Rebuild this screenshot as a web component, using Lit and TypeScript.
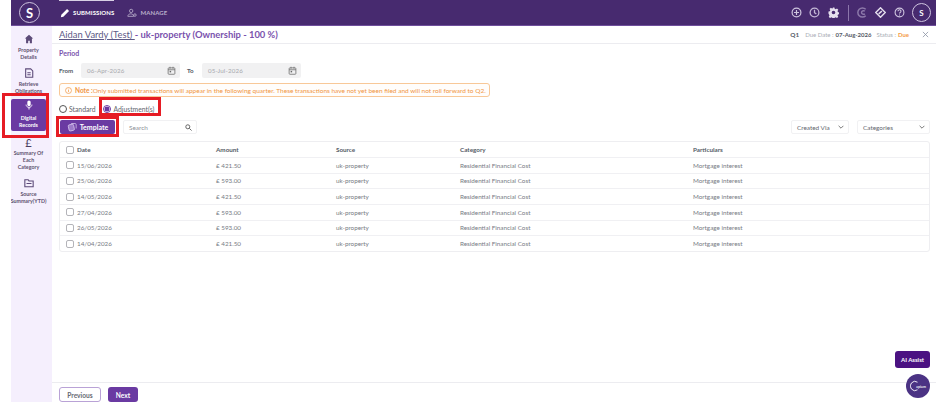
import { LitElement, css, html, svg } from "lit";
import { customElement } from "lit/decorators.js";

const rows = [
  ["15/06/2026", "£ 421.50"],
  ["25/06/2026", "£ 593.00"],
  ["14/05/2026", "£ 421.50"],
  ["27/04/2026", "£ 593.00"],
  ["26/05/2026", "£ 593.00"],
  ["14/04/2026", "£ 421.50"],
];

const calendar = html`<svg class="cal" viewBox="0 0 12 12" fill="none" stroke="#666" stroke-width="1">
  <rect x="1.5" y="2.5" width="9" height="8.5" rx="1"></rect>
  <path d="M1.5 5h9M4 1v2.500M8 1v2.500"></path>
  <rect x="3.5" y="6.5" width="2" height="2" fill="#666" stroke="none"></rect>
</svg>`;

const chevron = html`<svg class="chev" viewBox="0 0 10 6" fill="none" stroke="#555" stroke-width="1.3"><path d="M1 1l4 4 4-4"></path></svg>`;

const navIcons = {
  home: svg`<path d="M6 1L1 5.500h1.500V11h2.500V8h2v3h2.500V5.500H11z" fill="#5c4a78"></path>`,
  doc: svg`<path d="M2 1h6l2.500 2.500V11H2z" fill="none" stroke="#5c4a78" stroke-width="1.300"></path><path d="M4 5h4v1.200H4zM4 7.500h4v1.200H4z" fill="#5c4a78"></path>`,
  mic: svg`<rect x="4" y="0.500" width="4" height="7" rx="2" fill="#fff"></rect><path d="M2.500 5.500c0 4.500 7 4.500 7 0" fill="none" stroke="#fff"></path><path d="M5.400 9h1.200v2.500H5.400z" fill="#fff"></path>`,
  folder: svg`<path d="M1 2h4l1 1.500h5V10.500H1z" fill="none" stroke="#5c4a78" stroke-width="1.300"></path><path d="M3 6h6v1.200H3z" fill="#5c4a78"></path>`,
};

@customElement("app-root")
export class AppRoot extends LitElement {
  static styles = css`
    :host {
      display: block;
      position: relative;
      width: 936px;
      height: 402px;
      overflow: hidden;
      background: #fff;
      font-family: "Lato", "Noto Sans", sans-serif;
      color: #555b66;
    }
    .shell {
      margin-left: 11px;
      height: 100%;
      display: flex;
      flex-direction: column;
    }
    header {
      height: 26px;
      box-sizing: border-box;
      flex: none;
      background: #472a6f;
      border-bottom: 1px solid #6f4e9c;
      display: flex;
      align-items: center;
      color: #fff;
      padding-right: 5px;
      position: relative;
    }
    .logo {
      width: 21px;
      height: 21px;
      box-sizing: border-box;
      border: 1px solid #cfc4df;
      border-radius: 50%;
      display: flex;
      align-items: center;
      justify-content: center;
      font-size: 13px;
      font-weight: 700;
      color: #fff;
      flex: none;
    }
    .logo.main {
      margin-left: 8px;
    }
    .tab {
      display: flex;
      align-items: center;
      gap: 3px;
      font-size: 6px;
      font-weight: 700;
      letter-spacing: 0.1px;
    }
    .tab svg {
      width: 10px;
      height: 10px;
    }
    .tab.first {
      margin-left: 20px;
    }
    .tab.second {
      margin-left: 13px;
      color: #b9aecb;
    }
    .strip {
      position: absolute;
      left: 48px;
      top: 0;
      width: 55px;
      height: 1px;
      background: #d8d0e4;
    }
    .tools {
      margin-left: auto;
      display: flex;
      align-items: center;
      gap: 7.5px;
    }
    .tools svg {
      width: 11px;
      height: 11px;
      display: block;
    }
    .tools .sep {
      width: 1px;
      height: 16px;
      background: #8c76ab;
      margin-left: 2px;
    }
    .tools .logo {
      width: 19px;
      height: 19px;
      font-size: 8px;
    }
    .body {
      flex: 1;
      display: flex;
      min-height: 0;
    }
    nav {
      width: 41px;
      flex: none;
      box-sizing: border-box;
      overflow: hidden;
      background: #f5effd;
      display: flex;
      flex-direction: column;
      align-items: center;
      padding: 8px 6px 0 0;
      font-size: 5.3px;
      font-weight: 700;
      line-height: 7px;
      text-align: center;
      color: #5d5270;
    }
    .item {
      width: 35px;
      display: flex;
      flex-direction: column;
      align-items: center;
      margin-bottom: 7px;
      white-space: nowrap;
    }
    .item svg {
      width: 10px;
      height: 10px;
      margin-bottom: 3px;
    }
    .item.active {
      background: #6a3aa2;
      border-radius: 2px;
      color: #fff;
      padding-top: 1px;
      margin: -3px 0 0;
      height: 32px;
      box-sizing: border-box;
      flex: none;
    }
    .item.active svg {
      margin-bottom: 5px;
    }
    .item.pound {
      margin-top: 7px;
    }
    .pound b {
      font-size: 11px;
      line-height: 10px;
      margin-bottom: 2px;
      font-weight: 400;
      color: #4a3d60;
    }
    main {
      flex: 1;
      min-width: 0;
      display: flex;
      flex-direction: column;
    }
    .title {
      height: 18px;
      box-sizing: border-box;
      flex: none;
      padding: 0 7px;
      border-bottom: 1px solid #ececf0;
      display: flex;
      align-items: center;
      font-size: 9.4px;
      font-weight: 700;
      color: #7a52ad;
    }
    .title u {
      color: #5d5a86;
      font-weight: 400;
    }
    .meta {
      margin-left: auto;
      display: flex;
      align-items: center;
      font-size: 6px;
      font-weight: 400;
      color: #a9adb5;
      gap: 5px;
    }
    .meta b {
      color: #555b66;
      font-weight: 700;
    }
    .meta .q {
      font-size: 6.4px;
      margin-right: 1px;
    }
    .meta .due {
      color: #f49b45;
      font-weight: 700;
    }
    .meta span.pair {
      display: inline-flex;
      gap: 2px;
    }
    .meta svg {
      width: 7px;
      height: 7px;
      margin-left: 8px;
    }
    .content {
      flex: 1;
      padding: 0 6px 0 7px;
      min-height: 0;
    }
    .period {
      font-size: 7px;
      font-weight: 700;
      color: #7a52ad;
      margin-top: 5px;
      line-height: 9px;
    }
    .dates {
      display: flex;
      align-items: center;
      margin-top: 5px;
      font-size: 6.2px;
      font-weight: 700;
    }
    .dates .from {
      width: 22px;
    }
    .dates .to {
      width: 15px;
      margin-left: 7px;
    }
    .date {
      width: 99px;
      height: 15px;
      box-sizing: border-box;
      background: #f1f1f2;
      border-radius: 2px;
      padding: 0 4px 0 6px;
      display: flex;
      align-items: center;
      justify-content: space-between;
      font-weight: 400;
      color: #a6a8ad;
      letter-spacing: 0.15px;
    }
    .cal {
      width: 9px;
      height: 9px;
    }
    .note {
      width: 431px;
      height: 14px;
      box-sizing: border-box;
      margin-top: 5px;
      border: 1px solid #f8c898;
      border-radius: 3px;
      background: #fffdfb;
      color: #f0953f;
      font-size: 6.5px;
      display: flex;
      align-items: center;
      padding-left: 5px;
      gap: 3px;
      white-space: nowrap;
    }
    .note svg {
      width: 7px;
      height: 7px;
      flex: none;
    }
    .note b {
      font-weight: 700;
    }
    .radios {
      display: flex;
      align-items: center;
      font-size: 6.8px;
      margin-top: 6px;
      height: 12px;
      color: #63666e;
    }
    .radio {
      width: 8px;
      height: 8px;
      box-sizing: border-box;
      border: 1px solid #555;
      border-radius: 50%;
      background: #fff;
      margin-right: 2px;
      flex: none;
    }
    .radio.on {
      border-color: #6a3aa2;
      background: radial-gradient(circle, #6a3aa2 0 2.200px, #fff 2.700px);
    }
    .radios span + .radio {
      margin-left: 8px;
    }
    .tools-row {
      display: flex;
      align-items: center;
      margin-top: 5px;
      height: 14px;
    }
    .template {
      margin-left: 1px;
      width: 55px;
      height: 14px;
      border-radius: 2px;
      background: #6a3aa2;
      color: #fff;
      font-size: 7px;
      font-weight: 700;
      display: flex;
      align-items: center;
      justify-content: center;
      gap: 3px;
    }
    .template svg {
      width: 10px;
      height: 10px;
    }
    .search {
      width: 74px;
      height: 14px;
      box-sizing: border-box;
      margin-left: 8px;
      border: 1px solid #f1f1f3;
      border-radius: 2px;
      display: flex;
      align-items: center;
      justify-content: space-between;
      padding: 0 4px 0 5px;
      font-size: 6.4px;
      color: #8d9097;
    }
    .search svg {
      width: 7px;
      height: 7px;
    }
    .select {
      height: 14px;
      box-sizing: border-box;
      border: 1px solid #f1f1f3;
      border-radius: 2px;
      display: flex;
      align-items: center;
      justify-content: space-between;
      padding: 0 4px 0 5px;
      font-size: 6.4px;
      color: #63666e;
    }
    .select.via {
      width: 58px;
      margin-left: auto;
    }
    .select.cats {
      width: 73px;
      margin-left: 8px;
    }
    .chev {
      width: 6px;
      height: 4px;
    }
    .table {
      margin-top: 7px;
      border: 1px solid #eeeef1;
      border-radius: 3px;
      font-size: 6.3px;
    }
    .row {
      display: grid;
      grid-template-columns: 150px 120px 124px 233px 1fr;
      height: 15.67px;
      align-items: center;
      border-top: 1px solid #f0f0f3;
      box-sizing: border-box;
      padding-left: 6px;
      color: #777b84;
    }
    .row.head {
      border-top: 0;
      color: #555b66;
      font-weight: 700;
      height: 15px;
    }
    .first {
      display: flex;
      align-items: center;
      gap: 3px;
    }
    .check {
      width: 8px;
      height: 8px;
      box-sizing: border-box;
      border: 1px solid #b4b4b9;
      border-radius: 2px;
      background: #fff;
    }
    footer {
      height: 20px;
      flex: none;
      border-top: 1px solid #ececf0;
      box-sizing: border-box;
      padding: 4px 0 0 7px;
      display: flex;
      gap: 7px;
    }
    .btn {
      height: 15px;
      box-sizing: border-box;
      border-radius: 3px;
      display: flex;
      align-items: center;
      justify-content: center;
      font-size: 6.6px;
      font-weight: 700;
    }
    .btn.prev {
      width: 42px;
      border: 1px solid #b9a2d6;
      color: #666a73;
    }
    .btn.next {
      width: 30px;
      background: #6a3aa2;
      color: #fff;
    }
    .ai {
      position: absolute;
      left: 895px;
      top: 351px;
      width: 35px;
      height: 17px;
      border-radius: 3px;
      background: #4b1282;
      color: #fff;
      font-size: 6px;
      font-weight: 700;
      display: flex;
      align-items: center;
      justify-content: center;
    }
    .bot {
      position: absolute;
      left: 906px;
      top: 374px;
      width: 24px;
      height: 24px;
      border-radius: 50%;
      background: #4b3384;
      display: flex;
      align-items: center;
      justify-content: center;
      color: #eee9f5;
      font-size: 3.6px;
      font-weight: 700;
      gap: 0;
    }
    .bot svg {
      width: 9px;
      height: 12px;
      margin-right: -3px;
    }
    .mark {
      position: absolute;
      box-sizing: border-box;
      border: 3px solid #e61c24;
    }
    .mark.a {
      left: 2px;
      top: 93px;
      width: 47px;
      height: 45px;
    }
    .mark.b {
      left: 99px;
      top: 97px;
      width: 62px;
      height: 19px;
    }
    .mark.c {
      left: 56px;
      top: 116px;
      width: 63px;
      height: 21px;
    }
  `;

  private navIcon(name: keyof typeof navIcons) {
    return html`<svg viewBox="0 0 12 12">${navIcons[name]}</svg>`;
  }

  render() {
    return html`
      <div class="shell">
        <header>
          <div class="logo main">S</div>
          <div class="strip"></div>
          <div class="tab first">
            <svg viewBox="0 0 12 12"><path d="M1 11l.6-3L8.500 1.100l2.400 2.400L4 10.400z" fill="#fff"></path></svg>
            SUBMISSIONS
          </div>
          <div class="tab second">
            <svg viewBox="0 0 12 12" fill="none" stroke="#b9aecb"><circle cx="5" cy="3.500" r="2"></circle><path d="M1 10c0-4 7-4 7 0z"></path><circle cx="9.500" cy="8.500" r="1.500"></circle></svg>
            MANAGE
          </div>
          <div class="tools">
            <svg viewBox="0 0 12 12" fill="none" stroke="#cfc5df" stroke-width="1.300"><circle cx="6" cy="6" r="4.800"></circle><path d="M6 3.300v5.400M3.300 6h5.400"></path></svg>
            <svg viewBox="0 0 12 12" fill="none" stroke="#c4b9d6" stroke-width="1.400"><circle cx="6" cy="6" r="4.800"></circle><path d="M6 3v3.200l2 1.300"></path></svg>
            <svg viewBox="0 0 12 12"><path fill-rule="evenodd" fill="#e6e0ee" d="M5 .5h2l.3 1.500 1.200.5 1.300-.8 1.400 1.400-.8 1.300.5 1.200 1.500.3v2l-1.500.3-.5 1.200.8 1.300-1.400 1.400-1.300-.8-1.200.5-.3 1.500H5l-.3-1.500-1.200-.5-1.300.8-1.400-1.400.8-1.300-.5-1.200L.5 7V5l1.500-.3.500-1.200-.8-1.300 1.400-1.400 1.300.8 1.200-.5zM6 4a2 2 0 100 4 2 2 0 000-4z"></path></svg>
            <div class="sep"></div>
            <svg viewBox="0 0 12 12" fill="none" stroke="#8d79aa" stroke-width="1.600"><path d="M9.500 2.500a5 5 0 100 7"></path><path d="M8.500 4.700a2 2 0 100 2.600"></path></svg>
            <svg viewBox="0 0 12 12" fill="none" stroke="#e6e0ee" stroke-width="1.500"><path d="M6 .8L11.200 6 6 11.200.8 6z"></path><path d="M4 7.500L7.500 4.500"></path></svg>
            <svg viewBox="0 0 12 12" fill="none" stroke="#cfc5df" stroke-width="1.200"><circle cx="6" cy="6" r="4.800"></circle><path d="M4.400 4.700a1.600 1.600 0 113 .6c-.4.6-1.400.8-1.400 1.800M6 8.200v1"></path></svg>
            <div class="logo">S</div>
          </div>
        </header>
        <div class="body">
          <nav>
            <div class="item">${this.navIcon("home")}Property<br />Details</div>
            <div class="item">${this.navIcon("doc")}Retrieve<br />Obligations</div>
            <div class="item active">${this.navIcon("mic")}Digital<br />Records</div>
            <div class="item pound"><b>£</b>Summary Of<br />Each<br />Category</div>
            <div class="item">${this.navIcon("folder")}Source<br />Summary(YTD)</div>
          </nav>
          <main>
            <div class="title">
              <span><u>Aidan Vardy (Test) </u> - uk-property (Ownership - 100 %)</span>
              <div class="meta">
                <b class="q">Q1</b>
                <span class="pair">Due Date : <b>07-Aug-2026</b></span>
                <span class="pair">Status : <span class="due">Due</span></span>
                <svg viewBox="0 0 8 8" fill="none" stroke="#8b93a3" stroke-width="0.900"><path d="M1 1l6 6M7 1L1 7"></path></svg>
              </div>
            </div>
            <div class="content">
              <div class="period">Period</div>
              <div class="dates">
                <span class="from">From</span>
                <div class="date">06-Apr-2026 ${calendar}</div>
                <span class="to">To</span>
                <div class="date">05-Jul-2026 ${calendar}</div>
              </div>
              <div class="note">
                <svg viewBox="0 0 8 8" fill="none" stroke="#f0953f" stroke-width="0.800"><circle cx="4" cy="4" r="3.400"></circle><path d="M4 3.400v2.400M4 2v.8"></path></svg>
                <span><b>Note :</b>Only submitted transactions will appear in the following quarter. These transactions have not yet been filed and will not roll forward to Q2.</span>
              </div>
              <div class="radios">
                <div class="radio"></div><span>Standard</span>
                <div class="radio on"></div><span>Adjustment(s)</span>
              </div>
              <div class="tools-row">
                <div class="template">
                  <svg viewBox="0 0 12 12" fill="#9d7ac9" stroke="#d9c9ef" stroke-width="0.900"><path d="M5 1.800h4.500a1.500 1.500 0 011.500 1.500v4.500" fill="none"></path><rect x="2" y="3" width="6.500" height="7.500" rx="1.500" transform="rotate(-12 5 7)"></rect></svg>
                  Template
                </div>
                <div class="search">
                  Search
                  <svg viewBox="0 0 8 8" fill="none" stroke="#555" stroke-width="1"><circle cx="3.200" cy="3.200" r="2.300"></circle><path d="M5 5l2.500 2.500"></path></svg>
                </div>
                <div class="select via">Created Via ${chevron}</div>
                <div class="select cats">Categories ${chevron}</div>
              </div>
              <div class="table">
                <div class="row head">
                  <div class="first"><div class="check"></div>Date</div>
                  <div>Amount</div>
                  <div>Source</div>
                  <div>Category</div>
                  <div>Particulars</div>
                </div>
                ${rows.map(
                  ([date, amount]) => html`
                    <div class="row">
                      <div class="first"><div class="check"></div>${date}</div>
                      <div>${amount}</div>
                      <div>uk-property</div>
                      <div>Residential Financial Cost</div>
                      <div>Mortgage interest</div>
                    </div>
                  `
                )}
              </div>
            </div>
            <footer>
              <div class="btn prev">Previous</div>
              <div class="btn next">Next</div>
            </footer>
          </main>
        </div>
      </div>
      <div class="ai">AI Assist</div>
      <div class="bot">
        <svg viewBox="0 0 9 12" fill="none" stroke="#eee9f5" stroke-width="1"><path d="M7.500 2.200a4.600 4.600 0 100 7.600"></path></svg>
        <span>apium</span>
      </div>
      <div class="mark a"></div>
      <div class="mark b"></div>
      <div class="mark c"></div>
    `;
  }
}
